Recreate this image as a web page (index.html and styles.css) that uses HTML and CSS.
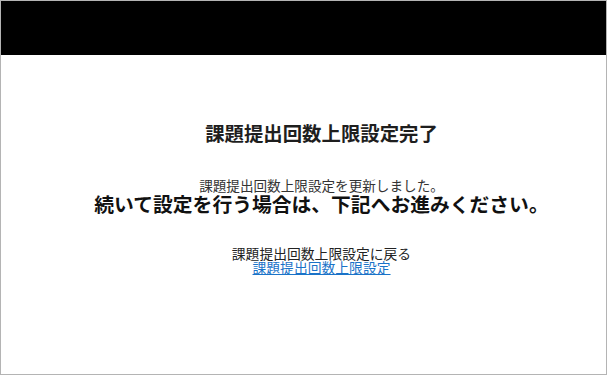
FILE: index.html
```html
<!DOCTYPE html>
<html lang="ja">
<head>
<meta charset="utf-8">
<link rel="stylesheet" href="styles.css">
</head>
<body>
<div class="frame">
  <div class="header"></div>
  <div class="content">
    <h1 class="title">課題提出回数上限設定完了</h1>
    <p class="message">課題提出回数上限設定を更新しました。</p>
    <p class="lead">続いて設定を行う場合は、下記へお進みください。</p>
    <div class="links">
      <div class="back">課題提出回数上限設定に戻る</div>
      <a class="link" href="#">課題提出回数上限設定</a>
    </div>
  </div>
</div>
</body>
</html>
```
FILE: styles.css
```css
html, body {
  margin: 0;
  padding: 0;
  background: #ffffff;
}
body {
  font-family: "Noto Sans CJK JP", "Noto Sans", sans-serif;
  color: #222222;
}
.frame {
  box-sizing: border-box;
  width: 607px;
  height: 375px;
  border: 1px solid #b4b4b4;
  display: flex;
  flex-direction: column;
}
.header {
  height: 54px;
  background: #000000;
  flex: none;
}
.content {
  padding: 66px 0 0 36px;
  text-align: center;
}
.title {
  margin: 0;
  font-size: 19.4px;
  line-height: 24px;
  font-weight: 700;
  color: #1e1e1e;
}
.message {
  margin: 32px 0 0;
  font-size: 13.6px;
  line-height: 17px;
  color: #333333;
}
.lead {
  margin: 0;
  font-size: 19.8px;
  line-height: 20px;
  font-weight: 700;
  color: #111111;
}
.links {
  margin-top: 32px;
  font-size: 13.8px;
  line-height: 14px;
}
.back {
  color: #222222;
}
.link {
  color: #1a73c8;
  text-decoration: underline;
}
```
